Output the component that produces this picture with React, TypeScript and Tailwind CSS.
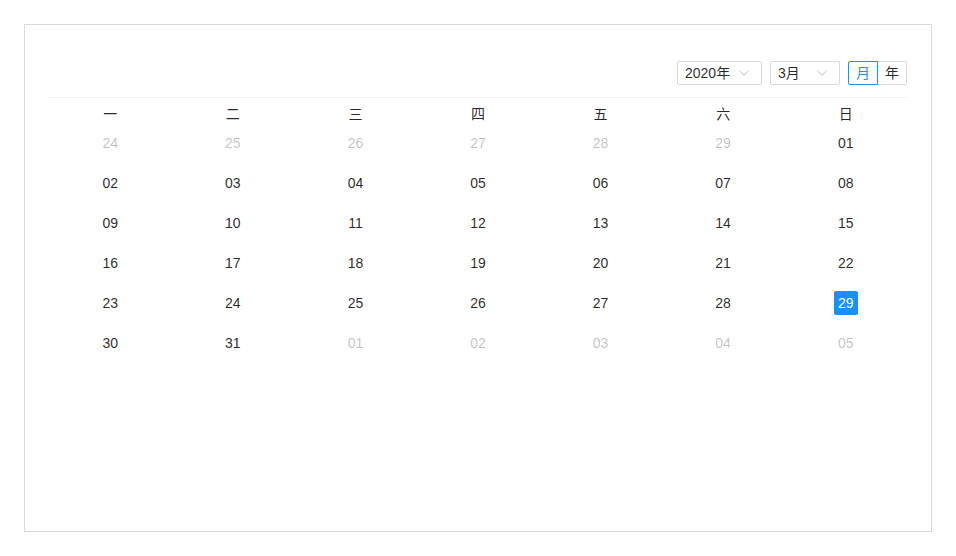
import React from "react";

const weekdays = ["一", "二", "三", "四", "五", "六", "日"];

type Cell = { d: string; cur: boolean; sel?: boolean };

const rows: Cell[][] = (() => {
  const all: Cell[] = [];
  for (const d of [24, 25, 26, 27, 28, 29]) all.push({ d: String(d), cur: false });
  for (let i = 1; i <= 31; i++) all.push({ d: String(i).padStart(2, "0"), cur: true, sel: i === 29 });
  for (const d of [1, 2, 3, 4, 5]) all.push({ d: String(d).padStart(2, "0"), cur: false });
  const r: Cell[][] = [];
  for (let i = 0; i < 6; i++) r.push(all.slice(i * 7, i * 7 + 7));
  return r;
})();

function Chevron() {
  return (
    <svg width="12" height="12" viewBox="0 0 12 12" className="absolute right-[11px] top-1/2 -translate-y-1/2">
      <path d="M1.2 3.6 L6 8.2 L10.8 3.6" fill="none" stroke="#bfbfbf" strokeWidth="1" />
    </svg>
  );
}

export default function App() {
  return (
    <div
      className="w-[956px] h-[556px] bg-white p-6"
      style={{ fontFamily: '"Liberation Sans", "Noto Sans CJK SC", sans-serif' }}
    >
      <div className="h-full border border-[#d9d9d9] p-6 text-[14px] text-[rgba(0,0,0,0.85)]">
        <div className="flex justify-end items-center gap-2 py-3 border-b border-[#f0f0f0]">
          <div className="relative w-[85px] h-6 border border-[#d9d9d9] rounded-[2px] pl-[7px] flex items-center leading-[22px]">
            2020年
            <Chevron />
          </div>
          <div className="relative w-[70px] h-6 border border-[#d9d9d9] rounded-[2px] pl-[7px] flex items-center leading-[22px]">
            3月
            <Chevron />
          </div>
          <div className="flex h-6">
            <div className="h-6 px-[7px] border border-[#1890ff] text-[#1890ff] rounded-l-[2px] leading-[22px] relative z-10">
              月
            </div>
            <div className="h-6 px-[7px] border border-[#d9d9d9] border-l-0 rounded-r-[2px] leading-[22px]">
              年
            </div>
          </div>
        </div>
        <div className="grid grid-cols-7 pt-[7px]">
          {weekdays.map((w) => (
            <div key={w} className="text-center leading-[18px] h-[18px]">
              {w}
            </div>
          ))}
        </div>
        {rows.map((r, ri) => (
          <div key={ri} className="grid grid-cols-7 h-[40px] items-center">
            {r.map((c, ci) => (
              <div key={ci} className="flex justify-center">
                <div
                  className={
                    "min-w-6 h-6 leading-6 text-center rounded-[2px] " +
                    (c.sel
                      ? "bg-[#1890ff] text-white"
                      : c.cur
                      ? "text-[rgba(0,0,0,0.85)]"
                      : "text-[rgba(0,0,0,0.25)]")
                  }
                >
                  {c.d}
                </div>
              </div>
            ))}
          </div>
        ))}
      </div>
    </div>
  );
}
